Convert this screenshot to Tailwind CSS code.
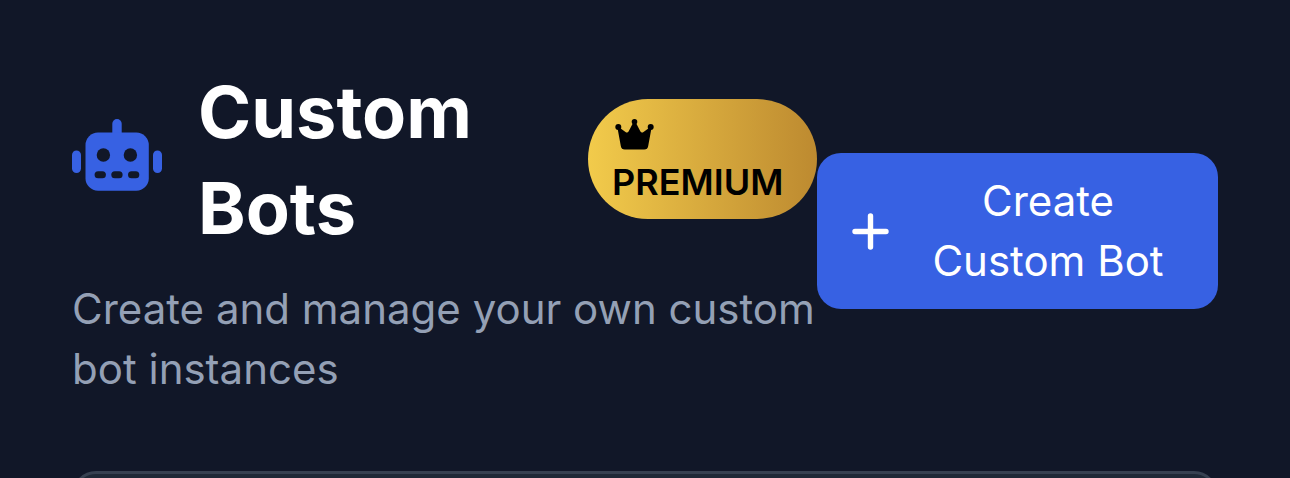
<!DOCTYPE html>
<html lang="en">
<head>
<meta charset="utf-8">
<meta name="viewport" content="width=device-width, initial-scale=1">
<title>Custom Bots</title>
<script src="https://cdn.jsdelivr.net/npm/@tailwindcss/browser@4"></script>
</head>
<body class="bg-[#111728] font-['Inter',sans-serif] text-white">
<main class="flex h-screen flex-col overflow-hidden px-[72px] pt-16">
  <header class="flex shrink-0 items-start justify-between">
    <div class="min-w-0 flex-1">
      <div class="flex items-center justify-between">
        <h1 class="flex items-center gap-9 text-[72px] leading-[96px] font-bold">
          <svg class="mb-2.5 h-[72px] w-[90px] shrink-0" viewBox="0 0 90 72" fill="#3761e3" aria-hidden="true">
            <rect x="40.300" y="0" width="9.400" height="20" rx="4.700"/>
            <rect x="13.500" y="13.500" width="63.300" height="58.200" rx="12.500"/>
            <rect x="0" y="31.500" width="9" height="22.500" rx="4.500"/>
            <rect x="81" y="31.500" width="9" height="22.500" rx="4.500"/>
            <g fill="#111728"><circle cx="31.400" cy="36" r="6.700"/><circle cx="58.400" cy="36" r="6.700"/>
            <rect x="22.600" y="52.300" width="11.300" height="7" rx="3.500"/><rect x="39.300" y="52.300" width="11.300" height="7" rx="3.500"/><rect x="56" y="52.300" width="11.300" height="7" rx="3.500"/></g>
          </svg>
          <span>Custom<br>Bots</span>
        </h1>
        <span class="mb-0.5 flex w-[229px] flex-col rounded-full bg-linear-to-r from-[#f2cb4b] to-[#bd8a30] px-6 pt-3 pb-[13px] text-4xl leading-12 font-semibold text-black">
          <span class="flex h-[47px] items-center pl-[3px]"><svg class="h-8 w-10" viewBox="0 0 40 32" fill="currentColor" aria-hidden="true"><circle cx="3.300" cy="8" r="3"/><circle cx="19.500" cy="2.800" r="2.800"/><circle cx="35.700" cy="8" r="3"/><path d="M2.500 9L5.800 27Q6.300 30.500 9.800 30.500H29.200Q32.700 30.500 33.200 27L36.500 9L34 9L28.500 13Q26.500 14.300 25.300 12.300L21 4H18L13.700 12.300Q12.500 14.300 10.500 13L5 9Z"/></svg></span>
          <span>PREMIUM</span>
        </span>
      </div>
      <p class="mt-[23px] text-[42px] leading-[60px] text-[#94a0b5]">Create and manage your own custom bot instances</p>
    </div>
    <button type="button" class="mt-[89px] flex w-[401px] shrink-0 items-center rounded-3xl bg-[#3761e3] px-[35px] py-[18px] text-[42px] leading-[60px]">
      <svg class="size-[37px] shrink-0" viewBox="0 0 37 37" fill="none" stroke="currentColor" stroke-width="5.400" stroke-linecap="round" aria-hidden="true"><path d="M18.500 3v31M3 18.500h31"/></svg>
      <span class="flex-1 pl-6">Create<br>Custom Bot</span>
    </button>
  </header>
  <section class="mt-[72px] min-h-40 flex-1 rounded-3xl border-[3px] border-[#374151] bg-[#1f2937]" aria-label="Bot list"></section>
</main>
</body>
</html>
